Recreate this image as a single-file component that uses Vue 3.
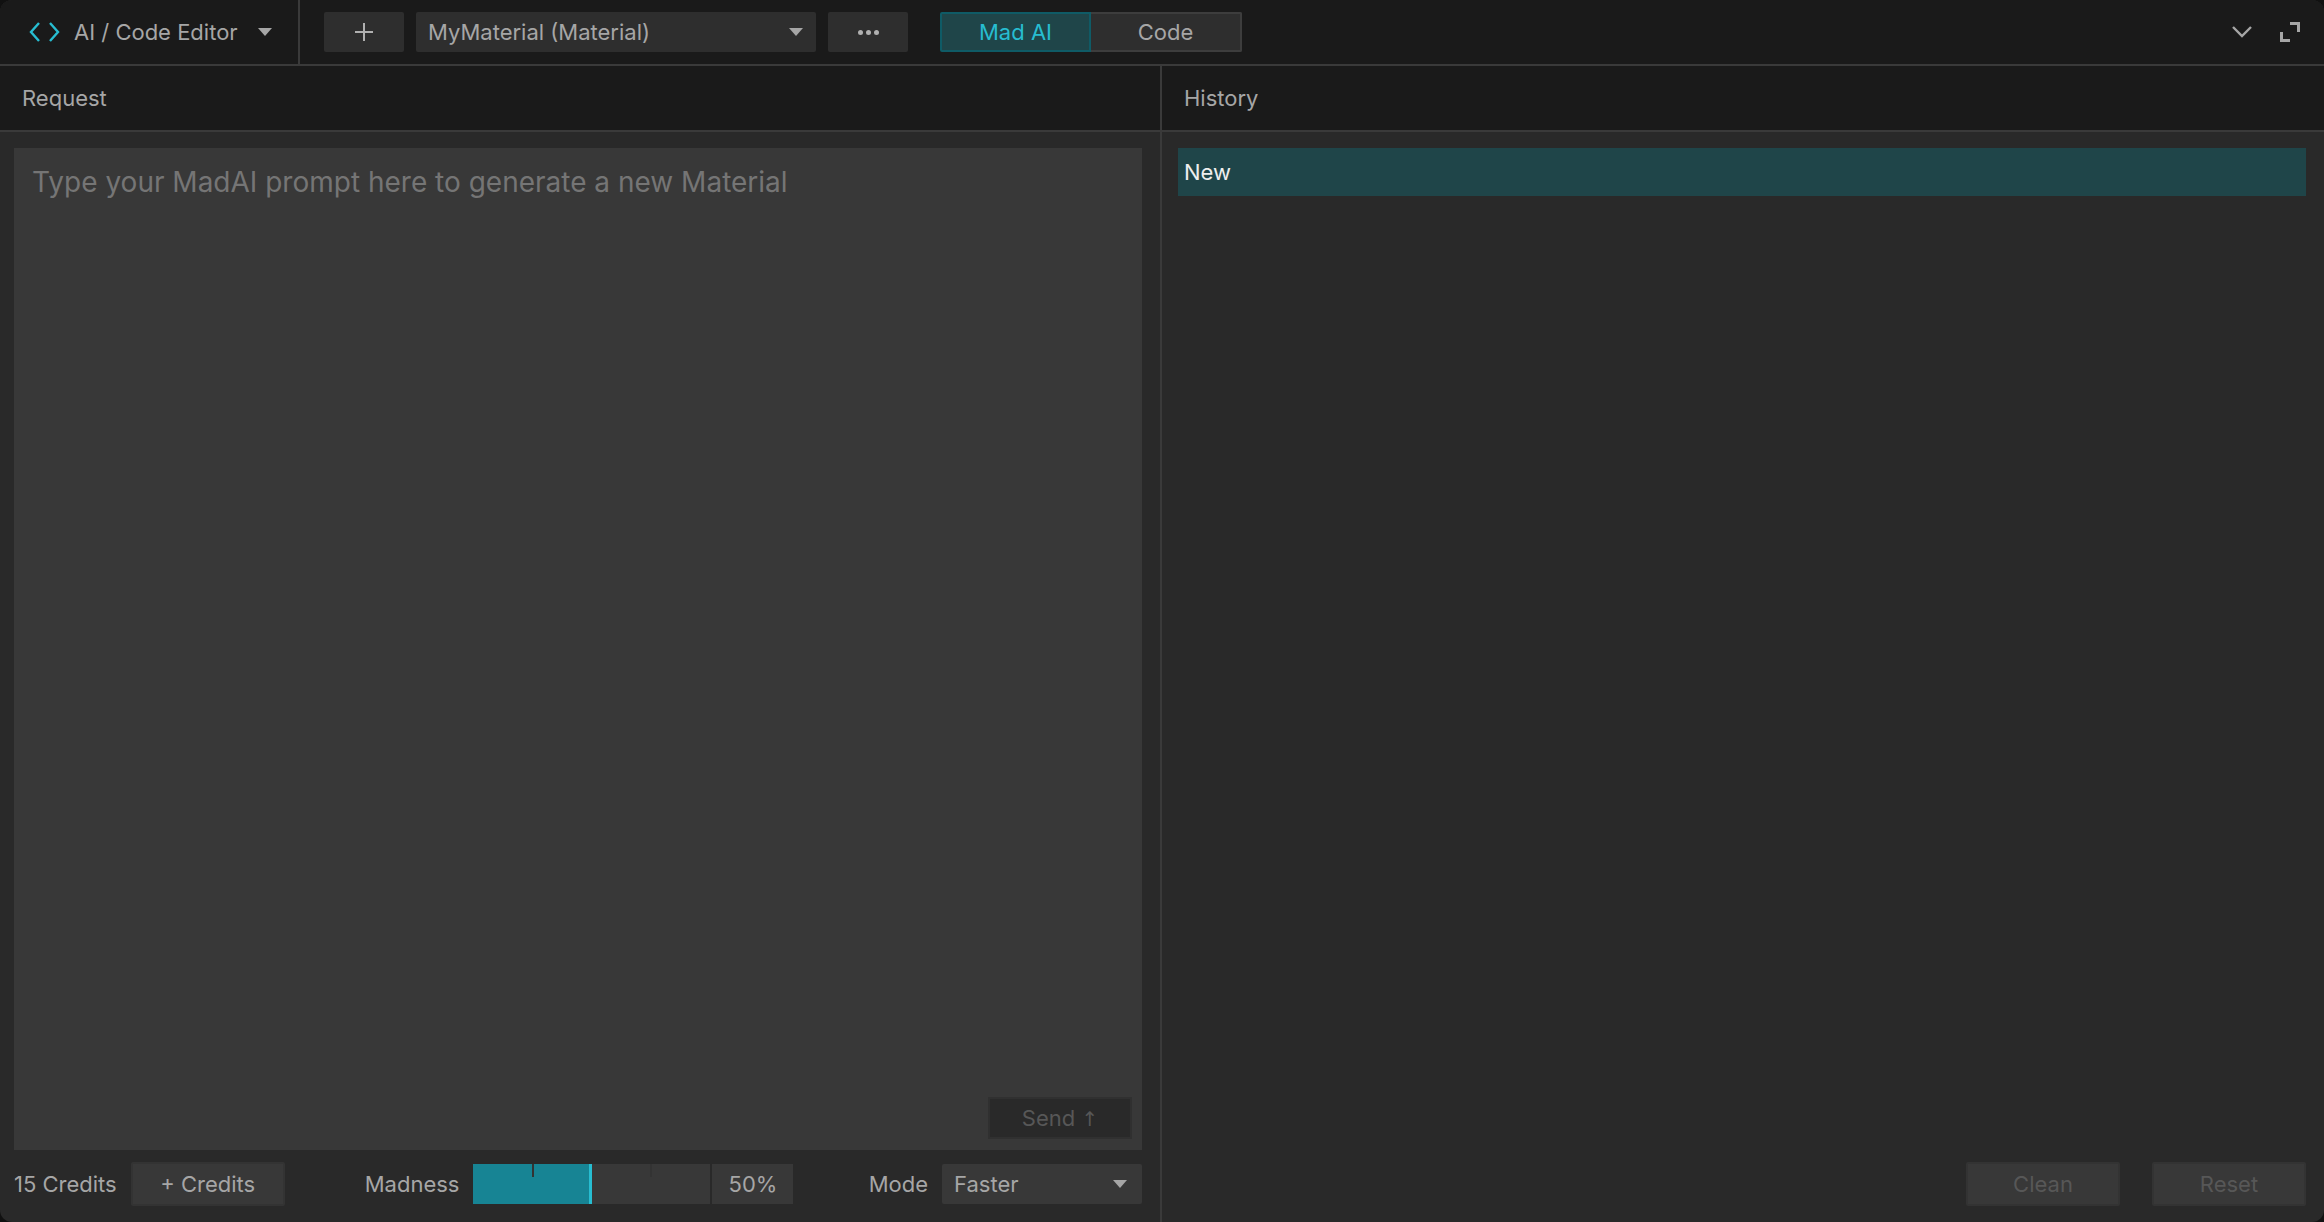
<template>
  <div class="editor">
    <header class="toolbar">
      <div class="mode-picker">
        <svg class="code-icon" viewBox="0 0 31 22" aria-hidden="true">
          <path d="M10 2 L2 11 L10 20 M21 2 L29 11 L21 20" />
        </svg>
        <span class="mode-title">AI / Code Editor</span>
        <span class="caret caret--title" />
      </div>
      <div class="toolbar-actions">
        <button type="button" class="tool-btn tool-btn--plus">
          <svg viewBox="0 0 18 18" aria-hidden="true"><path d="M9 0 V18 M0 9 H18" /></svg>
        </button>
        <div class="asset-select">
          <span>MyMaterial (Material)</span>
          <span class="caret" />
        </div>
        <button type="button" class="tool-btn tool-btn--more">
          <i /><i /><i />
        </button>
        <div class="segment">
          <button type="button" class="segment-btn segment-btn--active">Mad AI</button>
          <button type="button" class="segment-btn">Code</button>
        </div>
      </div>
      <div class="window-actions">
        <svg class="chevron" viewBox="0 0 20 12" aria-hidden="true"><path d="M1 1 L10 10 L19 1" /></svg>
        <svg class="expand" viewBox="0 0 20 20" aria-hidden="true">
          <path d="M10 1.5 H18.5 V10 M10 18.5 H1.5 V10" />
        </svg>
      </div>
    </header>

    <main class="panels">
      <section class="panel panel--request">
        <h2 class="panel-title">Request</h2>
        <div class="panel-body">
          <div class="prompt">
            <p class="prompt-placeholder">Type your MadAI prompt here to generate a new Material</p>
            <button type="button" class="send-btn">Send <span class="send-arrow">↑</span></button>
          </div>
          <div class="request-footer">
            <div class="credits">
              <span class="label">15 Credits</span>
              <button type="button" class="footer-btn">+ Credits</button>
            </div>
            <div class="madness">
              <span class="label">Madness</span>
              <div class="slider">
                <div class="slider-fill" :style="{ width: madness + '%' }" />
                <i class="slider-tick slider-tick--a" />
                <i class="slider-tick slider-tick--b" />
              </div>
              <div class="slider-value">{{ madness }}%</div>
            </div>
            <div class="mode">
              <span class="label">Mode</span>
              <div class="mode-select">
                <span>Faster</span>
                <span class="caret" />
              </div>
            </div>
          </div>
        </div>
      </section>

      <section class="panel panel--history">
        <h2 class="panel-title">History</h2>
        <div class="panel-body panel-body--history">
          <ul class="history-list">
            <li v-for="item in history" :key="item" class="history-item">{{ item }}</li>
          </ul>
          <div class="history-footer">
            <button type="button" class="ghost-btn">Clean</button>
            <button type="button" class="ghost-btn">Reset</button>
          </div>
        </div>
      </section>
    </main>
  </div>
</template>

<script setup>
const madness = 50
const history = ['New']
</script>

<style>
html,
body {
  margin: 0;
  background: #111;
}
</style>

<style scoped>
.editor {
  display: flex;
  flex-direction: column;
  width: 2324px;
  height: 1222px;
  overflow: hidden;
  border-radius: 12px;
  background: #292929;
  font-family: Inter, "Liberation Sans", sans-serif;
  font-size: 22px;
  color: #a6a6a6;
}

button {
  margin: 0;
  font: inherit;
  color: inherit;
}

.toolbar {
  display: flex;
  align-items: stretch;
  flex: 0 0 66px;
  box-sizing: border-box;
  height: 66px;
  background: #1a1a1a;
  border-bottom: 2px solid #3a3a3a;
}

.mode-picker {
  display: flex;
  align-items: center;
  box-sizing: border-box;
  width: 300px;
  padding-left: 29px;
  border-right: 2px solid #3a3a3a;
}

.code-icon {
  width: 31px;
  height: 22px;
  fill: none;
  stroke: #27bdd1;
  stroke-width: 2.4;
}

.mode-title {
  margin-left: 14px;
  white-space: nowrap;
}

.caret {
  display: block;
  flex: none;
  width: 0;
  height: 0;
  border-left: 7px solid transparent;
  border-right: 7px solid transparent;
  border-top: 8px solid #a6a6a6;
}

.caret--title {
  margin-left: 20px;
}

.toolbar-actions {
  display: flex;
  align-items: center;
  gap: 12px;
  padding-left: 24px;
}

.tool-btn {
  display: flex;
  align-items: center;
  justify-content: center;
  gap: 3px;
  width: 80px;
  height: 40px;
  padding: 0;
  border: 0;
  border-radius: 2px;
  background: #2e2e2e;
}

.tool-btn svg {
  width: 18px;
  height: 18px;
  fill: none;
  stroke: #b0b0b0;
  stroke-width: 2;
}

.tool-btn--more i {
  width: 5px;
  height: 5px;
  border-radius: 50%;
  background: #b0b0b0;
}

.asset-select {
  display: flex;
  align-items: center;
  justify-content: space-between;
  box-sizing: border-box;
  width: 400px;
  height: 40px;
  padding: 0 13px 0 12px;
  border-radius: 2px;
  background: #2e2e2e;
}

.segment {
  display: flex;
  margin-left: 20px;
}

.segment-btn {
  box-sizing: border-box;
  width: 151px;
  height: 40px;
  padding: 0;
  border: 2px solid #3d3d3d;
  border-left: 0;
  border-radius: 0 2px 2px 0;
  background: #2e2e2e;
}

.segment-btn--active {
  border: 2px solid #0f5b66;
  border-radius: 2px 0 0 2px;
  background: #1f4549;
  color: #27bdd1;
}

.window-actions {
  display: flex;
  align-items: center;
  gap: 28px;
  margin-left: auto;
  padding-right: 24px;
}

.chevron {
  width: 20px;
  height: 12px;
  fill: none;
  stroke: #a6a6a6;
  stroke-width: 2.4;
}

.expand {
  width: 20px;
  height: 20px;
  fill: none;
  stroke: #a6a6a6;
  stroke-width: 3;
}

.panels {
  display: grid;
  grid-template-columns: 1162px 1fr;
  flex: 1;
  min-height: 0;
}

.panel {
  display: flex;
  flex-direction: column;
  min-width: 0;
}

.panel--request {
  border-right: 2px solid #3a3a3a;
}

.panel-title {
  display: flex;
  align-items: center;
  flex: 0 0 66px;
  box-sizing: border-box;
  margin: 0;
  padding-left: 22px;
  border-bottom: 2px solid #3a3a3a;
  background: #1a1a1a;
  font-size: 22px;
  font-weight: 400;
}

.panel-body {
  display: flex;
  flex: 1;
  flex-direction: column;
  min-height: 0;
  padding: 16px 18px 16px 14px;
}

.prompt {
  position: relative;
  flex: 1;
  background: #383838;
}

.prompt-placeholder {
  margin: 0;
  padding: 16px 18px;
  font-size: 28px;
  line-height: 36px;
  color: #757575;
}

.send-btn {
  position: absolute;
  right: 10px;
  bottom: 11px;
  box-sizing: border-box;
  width: 144px;
  height: 42px;
  padding: 0;
  border: 2px solid #303030;
  background: #292929;
  color: #575757;
}

.send-arrow {
  font-family: "DejaVu Sans", sans-serif;
  font-size: 20px;
}

.request-footer {
  display: flex;
  align-items: center;
  height: 44px;
  margin-top: 12px;
}

.label {
  white-space: nowrap;
}

.credits,
.madness,
.mode {
  display: flex;
  align-items: center;
}

.footer-btn {
  box-sizing: border-box;
  width: 154px;
  height: 44px;
  margin-left: 14px;
  padding: 0;
  border: 2px solid #333;
  border-radius: 2px;
  background: #383838;
}

.madness {
  margin-left: 80px;
}

.slider {
  position: relative;
  width: 237px;
  height: 40px;
  margin-left: 14px;
  background: #383838;
}

.slider-fill {
  box-sizing: border-box;
  height: 100%;
  border-right: 3px solid #27bdd1;
  background: #178494;
}

.slider-tick {
  position: absolute;
  top: 0;
  width: 2px;
  height: 13px;
  background: #333;
}

.slider-tick--a {
  left: 59px;
}

.slider-tick--b {
  left: 177px;
}

.slider-value {
  display: flex;
  align-items: center;
  justify-content: center;
  width: 81px;
  height: 40px;
  margin-left: 2px;
  background: #383838;
}

.mode {
  margin-left: auto;
}

.mode-select {
  display: flex;
  align-items: center;
  justify-content: space-between;
  box-sizing: border-box;
  width: 200px;
  height: 40px;
  margin-left: 14px;
  padding: 0 15px 0 12px;
  border-radius: 2px;
  background: #383838;
}

.panel-body--history {
  padding: 16px 18px 16px 16px;
}

.history-list {
  flex: 1;
  margin: 0;
  padding: 0;
  list-style: none;
}

.history-item {
  display: flex;
  align-items: center;
  height: 48px;
  padding-left: 6px;
  background: #1f4549;
  color: #eee;
}

.history-footer {
  display: flex;
  justify-content: flex-end;
  gap: 32px;
  height: 44px;
  margin-top: 12px;
}

.ghost-btn {
  box-sizing: border-box;
  width: 154px;
  height: 44px;
  padding: 0;
  border: 2px solid #333;
  border-radius: 2px;
  background: #383838;
  color: #575757;
}
</style>
